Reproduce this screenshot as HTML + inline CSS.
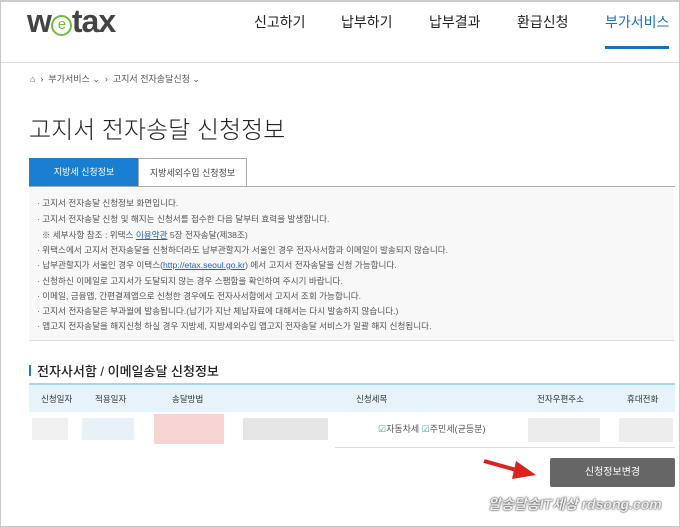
<!DOCTYPE html>
<html><head><meta charset="utf-8"><style>
*{margin:0;padding:0;box-sizing:border-box}
body{width:680px;height:527px;overflow:hidden;background:#fff;font-family:"Liberation Sans","Noto Sans CJK KR",sans-serif;position:relative;color:#333}
.frame{position:absolute;left:0;top:0;width:680px;height:527px;border:1px solid #c8c8c8;border-top:2px solid #ccc}
.abs{position:absolute;white-space:nowrap}
.logo{left:27px;top:3px;font-size:32px;font-weight:bold;color:#444;letter-spacing:-1px}
.logo span{display:inline-block;width:21px;height:21px;border:2px solid #6cbf3a;border-radius:50%;font-size:15px;line-height:16px;text-align:center;color:#6cbf3a;vertical-align:3px;font-weight:normal}
.nav{top:12px;font-size:14px;color:#222}
.hline{position:absolute;left:1px;right:1px;top:62px;height:1px;background:#ddd}
.bc{top:72px;left:30px;font-size:9px;color:#555}
.title{top:110px;left:29px;font-size:24px;color:#222;font-weight:300}
.tab1{left:29px;top:158px;width:110px;height:29px;background:#1a7fd1;color:#fff;font-size:9px;text-align:center;line-height:29px}
.tab2{left:138px;top:158px;width:109px;height:29px;border:1px solid #aaa;border-bottom:none;color:#444;font-size:9px;text-align:center;line-height:28px}
.box{position:absolute;left:29px;top:186px;width:645px;height:155px;background:#f8f8f8;border-top:1px solid #aaa;border-bottom:1px solid #ddd}
.box div{position:absolute;left:8px;font-size:8.6px;color:#555;white-space:nowrap}
.box a{color:#1a64b8;text-decoration:underline}
.sec{top:361px;left:29px;font-size:13px;color:#222;font-weight:500}
.sec:before{content:"";display:inline-block;width:2px;height:11px;background:#1a7fd1;margin-right:6px}
.th{position:absolute;left:29px;top:383px;width:646px;height:29px;background:#e6f3fa;border-top:2px solid #a9d5ec}
.th div{position:absolute;top:8px;font-size:8.5px;color:#333}
.blur{position:absolute;height:22px;top:418px}
.btn{left:550px;top:458px;width:125px;height:29px;background:#666;color:#fff;font-size:10px;text-align:center;line-height:29px;border-radius:2px}
.wm{left:488px;top:494px;font-size:14px;font-style:italic;font-weight:bold;color:#eee;text-shadow:0 0 2px #444,0 0 1px #444}
</style></head><body>
<div class="frame"></div>
<div class="abs logo">w<span>e</span>tax</div>
<div class="abs nav" style="left:254px">신고하기</div>
<div class="abs nav" style="left:341px">납부하기</div>
<div class="abs nav" style="left:429px">납부결과</div>
<div class="abs nav" style="left:517px">환급신청</div>
<div class="abs nav" style="left:605px;color:#1a6fc0">부가서비스</div>
<div style="position:absolute;left:605px;top:46px;width:64px;height:3px;background:#1a6fc0"></div>
<div class="hline"></div>
<div class="abs bc">⌂ &nbsp;›&nbsp; 부가서비스 ⌄ &nbsp;›&nbsp; 고지서 전자송달신청 ⌄</div>
<div class="abs title">고지서 전자송달 신청정보</div>
<div class="abs tab1">지방세 신청정보</div>
<div class="abs tab2">지방세외수입 신청정보</div>
<div style="position:absolute;left:247px;top:186px;width:428px;height:1px;background:#aaa"></div>
<div class="box">
<div style="top:10px">· 고지서 전자송달 신청정보 화면입니다.</div>
<div style="top:26px">· 고지서 전자송달 신청 및 해지는 신청서를 접수한 다음 달부터 효력을 발생합니다.</div>
<div style="top:42px">&nbsp; ※ 세부사항 참조 : 위택스 <a>이용약관</a> 5장 전자송달(제38조)</div>
<div style="top:57px">· 위택스에서 고지서 전자송달을 신청하더라도 납부관할지가 서울인 경우 전자사서함과 이메일이 발송되지 않습니다.</div>
<div style="top:72px">· 납부관할지가 서울인 경우 이택스(<a>http://etax.seoul.go.kr</a>) 에서 고지서 전자송달을 신청 가능합니다.</div>
<div style="top:88px">· 신청하신 이메일로 고지서가 도달되지 않는 경우 스팸함을 확인하여 주시기 바랍니다.</div>
<div style="top:103px">· 이메일, 금융앱, 간편결제앱으로 신청한 경우에도 전자사서함에서 고지서 조회 가능합니다.</div>
<div style="top:118px">· 고지서 전자송달은 부과월에 발송됩니다.(납기가 지난 체납자료에 대해서는 다시 발송하지 않습니다.)</div>
<div style="top:133px">· 앱고지 전자송달을 해지신청 하실 경우 지방세, 지방세외수입 앱고지 전자송달 서비스가 일괄 해지 신청됩니다.</div>
</div>
<div class="abs sec">전자사서함 / 이메일송달 신청정보</div>
<div class="th">
<div style="left:12px">신청일자</div><div style="left:66px">적용일자</div><div style="left:143px">송달방법</div>
<div style="left:327px">신청세목</div><div style="left:508px">전자우편주소</div><div style="left:598px">휴대전화</div>
</div>
<div class="blur" style="left:32px;width:36px;background:#f0f0f0"></div>
<div class="blur" style="left:82px;width:52px;background:#e8f0f8"></div>
<div class="blur" style="left:154px;width:70px;height:30px;top:414px;background:#f7d4d4"></div>
<div class="blur" style="left:243px;width:85px;background:#e6e6e6"></div>
<div class="blur" style="left:528px;width:72px;height:24px;background:#ececec"></div>
<div class="blur" style="left:619px;width:54px;height:24px;background:#ededed"></div>
<div class="abs" style="left:378px;top:422px;font-size:9px;color:#555"><span style="color:#3a9ad9">☑</span>자동차세 <span style="color:#3a9ad9">☑</span>주민세(균등분)</div>
<div style="position:absolute;left:335px;top:447px;width:340px;height:1px;background:#ddd"></div>
<svg style="position:absolute;left:480px;top:455px" width="60" height="26"><line x1="4" y1="6" x2="40" y2="16" stroke="#d9231f" stroke-width="4"/><polygon points="36,6 56,20 32,24" fill="#d9231f"/></svg>
<div class="abs btn">신청정보변경</div>
<div class="abs wm">알송달송IT세상 rdsong.com</div>
</body></html>
